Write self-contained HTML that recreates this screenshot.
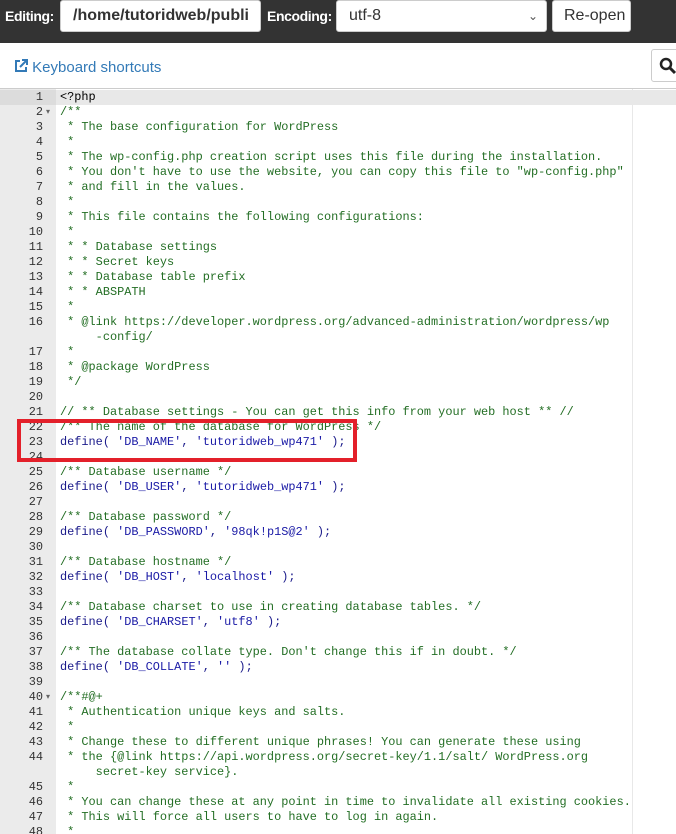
<!DOCTYPE html>
<html><head><meta charset="utf-8"><style>
body{margin:0;width:676px;height:833px;overflow:hidden;background:#fff;font-family:"Liberation Sans",sans-serif;position:relative}
.hdr{position:absolute;left:0;top:0;width:676px;height:43px;background:#333}
.lbl{position:absolute;top:8px;color:#fff;font-weight:bold;font-size:14px;letter-spacing:-0.4px}
.box{position:absolute;top:0;height:32px;background:#fff;border:1px solid #ccc;border-radius:3px;box-sizing:border-box;font-size:16px;color:#333;line-height:30px;padding-left:12px}
.kb{position:absolute;left:14px;top:59px;color:#337ab7;font-size:15px}
.srch{position:absolute;left:651px;top:49px;width:40px;height:33px;border:1px solid #ccc;border-radius:3px;box-sizing:border-box;background:#fff}
.ed{position:absolute;left:0;top:88px;width:676px;height:745px;border-top:1px solid #ccc;overflow:hidden}
.gut{position:absolute;left:0;top:0;width:56px;height:100%;background:#ebebeb}
.pm{position:absolute;left:632px;top:0;width:1px;height:100%;background:#e8e8e8}
.code{position:absolute;left:0;top:1px;width:676px;font-family:"Liberation Mono",monospace;font-size:11.9px;line-height:15px}
.r{height:15px;position:relative;white-space:pre}
.n{position:absolute;left:0;width:43px;text-align:right;color:#333}
.t{position:absolute;left:60px;color:#236e24}
.a{background:#e8e8e8}.a .n{background:#dcdcdc;width:56px;padding-right:13px;box-sizing:border-box}
.f::after{content:"▾";position:absolute;left:46px;font-size:8px;color:#666}
.k{color:#1a1a8a}.s{color:#1a1aa6}.p{color:#000}
.red{position:absolute;left:17px;top:419px;width:340px;height:43px;border:4px solid #e3202a;box-sizing:border-box}
</style></head><body>
<div class="hdr">
<div class="lbl" style="left:5px">Editing:</div>
<div class="box" style="left:60px;width:201px;font-weight:bold;overflow:hidden;white-space:nowrap">/home/tutoridweb/publi</div>
<div class="lbl" style="left:267px">Encoding:</div>
<div class="box" style="left:336px;width:211px">utf-8<span style="position:absolute;right:8px;top:0;font-size:12px;color:#555">&#8964;</span></div>
<div class="box" style="left:552px;width:79px;padding-left:11px">Re-open</div>
</div>
<div class="kb"><svg width="14" height="14" viewBox="0 0 14 14" style="vertical-align:-1px"><path d="M6 2H2v10h10V8" fill="none" stroke="#337ab7" stroke-width="2"/><path d="M8 1h5v5M13 1L6 8" fill="none" stroke="#337ab7" stroke-width="2"/></svg> Keyboard shortcuts</div>
<div class="srch"><svg width="20" height="20" viewBox="0 0 20 20" style="position:absolute;left:6px;top:6px"><circle cx="8" cy="8" r="5" fill="none" stroke="#222" stroke-width="2.5"/><path d="M12 12l5 5" stroke="#222" stroke-width="3"/></svg></div>
<div class="ed"><div class="gut"></div><div class="pm"></div>
<div class="code">
<div class="r a"><span class="n">1</span><span class="t p">&lt;?php</span></div>
<div class="r f"><span class="n">2</span><span class="t">/**</span></div>
<div class="r"><span class="n">3</span><span class="t"> * The base configuration for WordPress</span></div>
<div class="r"><span class="n">4</span><span class="t"> *</span></div>
<div class="r"><span class="n">5</span><span class="t"> * The wp-config.php creation script uses this file during the installation.</span></div>
<div class="r"><span class="n">6</span><span class="t"> * You don't have to use the website, you can copy this file to "wp-config.php"</span></div>
<div class="r"><span class="n">7</span><span class="t"> * and fill in the values.</span></div>
<div class="r"><span class="n">8</span><span class="t"> *</span></div>
<div class="r"><span class="n">9</span><span class="t"> * This file contains the following configurations:</span></div>
<div class="r"><span class="n">10</span><span class="t"> *</span></div>
<div class="r"><span class="n">11</span><span class="t"> * * Database settings</span></div>
<div class="r"><span class="n">12</span><span class="t"> * * Secret keys</span></div>
<div class="r"><span class="n">13</span><span class="t"> * * Database table prefix</span></div>
<div class="r"><span class="n">14</span><span class="t"> * * ABSPATH</span></div>
<div class="r"><span class="n">15</span><span class="t"> *</span></div>
<div class="r"><span class="n">16</span><span class="t"> * @link https://developer.wordpress.org/advanced-administration/wordpress/wp</span></div>
<div class="r"><span class="t">     -config/</span></div>
<div class="r"><span class="n">17</span><span class="t"> *</span></div>
<div class="r"><span class="n">18</span><span class="t"> * @package WordPress</span></div>
<div class="r"><span class="n">19</span><span class="t"> */</span></div>
<div class="r"><span class="n">20</span></div>
<div class="r"><span class="n">21</span><span class="t">// ** Database settings - You can get this info from your web host ** //</span></div>
<div class="r"><span class="n">22</span><span class="t">/** The name of the database for WordPress */</span></div>
<div class="r"><span class="n">23</span><span class="t k">define( <span class="s">'DB_NAME'</span>, <span class="s">'tutoridweb_wp471'</span> );</span></div>
<div class="r"><span class="n">24</span></div>
<div class="r"><span class="n">25</span><span class="t">/** Database username */</span></div>
<div class="r"><span class="n">26</span><span class="t k">define( <span class="s">'DB_USER'</span>, <span class="s">'tutoridweb_wp471'</span> );</span></div>
<div class="r"><span class="n">27</span></div>
<div class="r"><span class="n">28</span><span class="t">/** Database password */</span></div>
<div class="r"><span class="n">29</span><span class="t k">define( <span class="s">'DB_PASSWORD'</span>, <span class="s">'98qk!p1S@2'</span> );</span></div>
<div class="r"><span class="n">30</span></div>
<div class="r"><span class="n">31</span><span class="t">/** Database hostname */</span></div>
<div class="r"><span class="n">32</span><span class="t k">define( <span class="s">'DB_HOST'</span>, <span class="s">'localhost'</span> );</span></div>
<div class="r"><span class="n">33</span></div>
<div class="r"><span class="n">34</span><span class="t">/** Database charset to use in creating database tables. */</span></div>
<div class="r"><span class="n">35</span><span class="t k">define( <span class="s">'DB_CHARSET'</span>, <span class="s">'utf8'</span> );</span></div>
<div class="r"><span class="n">36</span></div>
<div class="r"><span class="n">37</span><span class="t">/** The database collate type. Don't change this if in doubt. */</span></div>
<div class="r"><span class="n">38</span><span class="t k">define( <span class="s">'DB_COLLATE'</span>, <span class="s">''</span> );</span></div>
<div class="r"><span class="n">39</span></div>
<div class="r f"><span class="n">40</span><span class="t">/**#@+</span></div>
<div class="r"><span class="n">41</span><span class="t"> * Authentication unique keys and salts.</span></div>
<div class="r"><span class="n">42</span><span class="t"> *</span></div>
<div class="r"><span class="n">43</span><span class="t"> * Change these to different unique phrases! You can generate these using</span></div>
<div class="r"><span class="n">44</span><span class="t"> * the {@link https://api.wordpress.org/secret-key/1.1/salt/ WordPress.org</span></div>
<div class="r"><span class="t">     secret-key service}.</span></div>
<div class="r"><span class="n">45</span><span class="t"> *</span></div>
<div class="r"><span class="n">46</span><span class="t"> * You can change these at any point in time to invalidate all existing cookies.</span></div>
<div class="r"><span class="n">47</span><span class="t"> * This will force all users to have to log in again.</span></div>
<div class="r"><span class="n">48</span><span class="t"> *</span></div>
</div></div>
<div class="red"></div>
</body></html>
